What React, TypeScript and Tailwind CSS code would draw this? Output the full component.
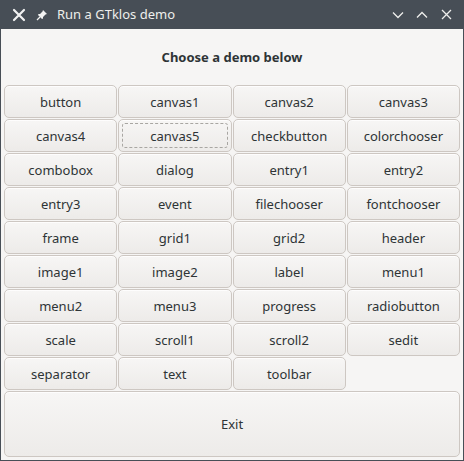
import React from "react";

const items = [
  "button","canvas1","canvas2","canvas3",
  "canvas4","canvas5","checkbutton","colorchooser",
  "combobox","dialog","entry1","entry2",
  "entry3","event","filechooser","fontchooser",
  "frame","grid1","grid2","header",
  "image1","image2","label","menu1",
  "menu2","menu3","progress","radiobutton",
  "scale","scroll1","scroll2","sedit",
  "separator","text","toolbar",
];

const btn =
  "flex items-center justify-center rounded-[5px] border border-[#cdc7c2] bg-gradient-to-b from-[#f7f6f5] to-[#edebe9] text-[#2e3436] text-[13px] shadow-[inset_0_1px_rgba(255,255,255,0.8)]";

export default function App() {
  return (
    <div className="w-[464px] h-[461px] flex flex-col bg-[#474e56] overflow-hidden" style={{ fontFamily: '"Noto Sans", "Open Sans", sans-serif' }}>
      <div className="h-[29px] flex items-center text-[#eeeeec] shrink-0">
        <svg className="ml-[12px]" width="14" height="14" viewBox="0 0 14 14">
          <path d="M2 2 L12 12 M12 2 L2 12" stroke="#f2f2f2" strokeWidth="2.2" strokeLinecap="round" />
        </svg>
        <svg className="ml-[10px]" width="12" height="12" viewBox="0 0 12 12">
          <path d="M7 1 L11 5 L9.5 5.5 L7 8 L7 9.5 L6 10 L2 6 L2.5 5 L4 5 L6.5 2.5 Z" fill="#f2f2f2" />
          <path d="M4 8 L1 11" stroke="#f2f2f2" strokeWidth="1.3" />
        </svg>
        <span className="ml-[9px] text-[13px] text-[#eeeeec]">Run a GTklos demo</span>
        <div className="flex-1" />
        <svg className="mr-[12px]" width="12" height="8" viewBox="0 0 12 8">
          <path d="M1 1.5 L6 6.5 L11 1.5" stroke="#eeeeec" strokeWidth="1.3" fill="none" />
        </svg>
        <svg className="mr-[13px]" width="12" height="8" viewBox="0 0 12 8">
          <path d="M1 6.5 L6 1.5 L11 6.5" stroke="#eeeeec" strokeWidth="1.3" fill="none" />
        </svg>
        <svg className="mr-[12px]" width="11" height="11" viewBox="0 0 11 11">
          <path d="M1 1 L10 10 M10 1 L1 10" stroke="#eeeeec" strokeWidth="1.3" />
        </svg>
      </div>
      <div className="flex-1 mx-px mb-px bg-[#f6f5f4] flex flex-col px-[3px] pb-[3px]">
        <div className="h-[56px] flex items-center justify-center font-bold text-[13px] text-[#2e3436] pt-[1px]">
          Choose a demo below
        </div>
        <div className="grid grid-cols-4 gap-px">
          {items.map((t) => (
            <div key={t} className={btn + " h-[33px] pt-[2px]"}>
              {t === "canvas5" ? (
                <div className="w-[calc(100%-6px)] h-[calc(100%-4px)] -mt-[2px] border border-dashed border-[#a8a6a2] rounded-[3px] flex items-center justify-center pt-[2px]">
                  {t}
                </div>
              ) : (
                t
              )}
            </div>
          ))}
        </div>
        <div className={btn + " mt-px flex-1 pt-[2px]"}>Exit</div>
      </div>
    </div>
  );
}
